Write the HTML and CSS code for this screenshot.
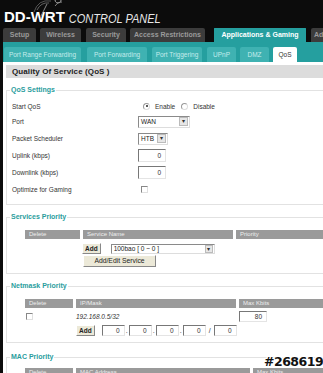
FILE: index.html
```html
<!DOCTYPE html>
<html lang="en">
<head>
    <meta charset="UTF-8">
    <title>DD-WRT Control Panel</title>
    <link rel="stylesheet" href="styles.css">
</head>
<body>
    <div class="page">
        <div class="header">
            <svg class="antenna" width="40" height="16" viewBox="0 0 40 16">
                <path d="M12 16 L18 4" stroke="#888" stroke-width="1" fill="none"/>
                <path d="M8 10 Q12 2 20 3" stroke="#777" stroke-width="0.8" fill="none"/>
                <path d="M5 12 Q9 -1 22 1" stroke="#666" stroke-width="0.8" fill="none"/>
                <path d="M29 3 a3 3 0 1 1 0.1 0" stroke="#aaa" stroke-width="1" fill="none"/>
                <path d="M26 6 Q29 1 33 2" stroke="#999" stroke-width="0.8" fill="none"/>
            </svg>
            <div class="logo">
                <span class="logo-dd">DD-WRT</span>
                <span class="logo-cp">CONTROL PANEL</span>
            </div>
        </div>

        <div class="main-tabs">
            <div class="tab t-setup">Setup</div>
            <div class="tab t-wireless">Wireless</div>
            <div class="tab t-security">Security</div>
            <div class="tab t-access">Access Restrictions</div>
            <div class="tab t-apps active">Applications &amp; Gaming</div>
            <div class="tab t-admin">Administration</div>
        </div>

        <div class="sub-tabs">
            <div class="subtab s-prf">Port Range Forwarding</div>
            <div class="subtab s-pf">Port Forwarding</div>
            <div class="subtab s-pt">Port Triggering</div>
            <div class="subtab s-upnp">UPnP</div>
            <div class="subtab s-dmz">DMZ</div>
            <div class="subtab s-qos active">QoS</div>
        </div>

        <div class="content">
            <h2 class="section-title">Quality Of Service (QoS )</h2>

            <fieldset class="group qos">
                <legend>QoS Settings</legend>
                <div class="row first">
                    <span class="label">Start QoS</span>
                    <span class="control">
                        <span class="radio checked"></span><span class="opt">Enable</span>
                        <span class="radio"></span><span class="opt">Disable</span>
                    </span>
                </div>
                <div class="row">
                    <span class="label">Port</span>
                    <span class="control"><span class="select port-select">WAN<span class="drop">&#9662;</span></span></span>
                </div>
                <div class="row">
                    <span class="label">Packet Scheduler</span>
                    <span class="control"><span class="select htb-select">HTB<span class="drop">&#9662;</span></span></span>
                </div>
                <div class="row">
                    <span class="label">Uplink (kbps)</span>
                    <span class="control"><span class="textbox">0</span></span>
                </div>
                <div class="row">
                    <span class="label">Downlink (kbps)</span>
                    <span class="control"><span class="textbox">0</span></span>
                </div>
                <div class="row">
                    <span class="label">Optimize for Gaming</span>
                    <span class="control"><span class="checkbox gaming"></span></span>
                </div>
            </fieldset>

            <fieldset class="group">
                <legend>Services Priority</legend>
                <div class="thead services-head">
                    <div class="th">Delete</div>
                    <div class="th">Service Name</div>
                    <div class="th">Priority</div>
                </div>
                <div class="service-add">
                    <span class="btn">Add</span>
                    <span class="select service-select">100bao [ 0 ~ 0 ]<span class="drop">&#9662;</span></span>
                </div>
                <div class="service-edit">
                    <span class="btn wide">Add/Edit Service</span>
                </div>
            </fieldset>

            <fieldset class="group">
                <legend>Netmask Priority</legend>
                <div class="thead netmask-head">
                    <div class="th">Delete</div>
                    <div class="th">IP/Mask</div>
                    <div class="th">Max Kbits</div>
                </div>
                <div class="netmask-row">
                    <span class="cell-del"><span class="checkbox"></span></span>
                    <span class="cell-ip">192.168.0.5/32</span>
                    <span class="textbox small">80</span>
                </div>
                <div class="netmask-add">
                    <span class="btn">Add</span>
                    <span class="textbox ip">0</span><span class="sep">.</span>
                    <span class="textbox ip">0</span><span class="sep">.</span>
                    <span class="textbox ip">0</span><span class="sep">.</span>
                    <span class="textbox ip">0</span><span class="sep slash">/</span>
                    <span class="textbox ip">0</span>
                </div>
            </fieldset>

            <fieldset class="group mac">
                <legend>MAC Priority</legend>
                <div class="thead mac-head">
                    <div class="th">Delete</div>
                    <div class="th">MAC Address</div>
                    <div class="th">Max Kbits</div>
                </div>
            </fieldset>
        </div>

        <div class="watermark">#268619</div>
    </div>
</body>
</html>
```

FILE: styles.css
```css
* {
    margin: 0;
    padding: 0;
    box-sizing: border-box;
}

body {
    background: #000;
    font-family: "Liberation Sans", Arial, sans-serif;
    width: 323px;
    height: 373px;
    overflow: hidden;
}

.page {
    position: relative;
    height: 373px;
    padding-left: 3px;
    background: #0c0c0c;
}

/* header */
.header {
    height: 28px;
    position: relative;
}

.antenna {
    position: absolute;
    left: 26px;
    top: 0;
}

.logo {
    display: flex;
    align-items: baseline;
    padding-top: 8px;
    padding-left: 1px;
    white-space: nowrap;
}

.logo-dd {
    color: #fff;
    font-weight: bold;
    font-size: 15px;
}

.logo-cp {
    color: #e8e8e8;
    font-style: italic;
    font-size: 11px;
    margin-left: 4px;
    display: inline-block;
    transform: scaleY(1.15);
}

/* main tabs */
.main-tabs {
    display: flex;
    height: 14px;
    white-space: nowrap;
    overflow: hidden;
}

.tab {
    background: #3c3c3c;
    color: #9a9a9a;
    font-weight: bold;
    font-size: 7px;
    line-height: 14px;
    text-align: center;
    border-radius: 2px 2px 0 0;
    flex-shrink: 0;
    overflow: hidden;
}

.t-setup { width: 33px; }
.t-wireless { width: 41px; margin-left: 4px; }
.t-security { width: 40px; margin-left: 5px; }
.t-access { width: 75px; margin-left: 4px; }
.t-apps { width: 92px; margin-left: 9px; }
.t-admin { width: 60px; margin-left: 5px; text-align: left; padding-left: 3px; }

.tab.active {
    background: #259f9f;
    color: #fff;
    margin-top: -1px;
    line-height: 16px;
    height: 15px;
}

/* sub tabs */
.sub-tabs {
    display: flex;
    background: #259f9f;
    height: 20px;
    padding: 5px 0 0 1px;
    white-space: nowrap;
}

.subtab {
    background: #3fb2b2;
    color: #c4ecec;
    font-size: 6.5px;
    line-height: 15px;
    text-align: center;
    border-radius: 2px 2px 0 0;
}

.s-prf { width: 77px; }
.s-pf { width: 60px; margin-left: 6px; }
.s-pt { width: 50px; margin-left: 5px; }
.s-upnp { width: 29px; margin-left: 5px; }
.s-dmz { width: 29px; margin-left: 4px; }
.s-qos { width: 24px; margin-left: 4px; }

.subtab.active {
    background: #fff;
    color: #333;
}

/* content */
.content {
    background: #fff;
    height: 311px;
    padding: 3px 0 0 3px;
}

.section-title {
    background: #dcdcdc;
    color: #222;
    font-size: 8px;
    font-weight: bold;
    line-height: 13px;
    padding-left: 6px;
    letter-spacing: 0.1px;
}

.group {
    border: 1px solid #e2e2e2;
    border-right: none;
    margin-top: 8px;
    padding: 5px 0 6px 5px;
}

.group legend {
    color: #2a9d9d;
    font-weight: bold;
    font-size: 7px;
    line-height: 8px;
    margin-left: -2px;
    padding: 0 1px;
}

.row {
    display: flex;
    align-items: center;
    height: 17px;
    font-size: 6.5px;
    color: #333;
}

.row.first {
    height: 14px;
}

.label {
    width: 126px;
}

.control {
    display: flex;
    align-items: center;
}

.radio {
    width: 7px;
    height: 7px;
    border-radius: 50%;
    border: 1px solid #999;
    border-right-color: #ddd;
    border-bottom-color: #ddd;
    background: #fff;
    position: relative;
    margin-left: 5px;
}

.radio.checked::after {
    content: "";
    position: absolute;
    left: 1.5px;
    top: 1.5px;
    width: 2px;
    height: 2px;
    border-radius: 50%;
    background: #222;
}

.opt {
    margin-left: 5px;
    margin-right: 1px;
}

.select {
    display: inline-flex;
    align-items: center;
    justify-content: space-between;
    height: 12px;
    border: 1px solid #8a8a8a;
    border-right-color: #ddd;
    border-bottom-color: #ddd;
    background: #fff;
    font-size: 6.5px;
    color: #222;
    padding-left: 2px;
}

.drop {
    width: 9px;
    height: 9px;
    margin-right: 1px;
    background: #e6e6e6;
    border: 1px solid #bbb;
    font-size: 6px;
    line-height: 7px;
    text-align: center;
    color: #333;
}

.port-select {
    width: 52px;
}

.htb-select {
    width: 30px;
}

.textbox {
    display: inline-block;
    width: 28px;
    height: 13px;
    border: 1px solid #777;
    border-right-color: #e4e4e4;
    border-bottom-color: #e4e4e4;
    background: #fff;
    font-size: 6.5px;
    line-height: 11px;
    text-align: right;
    padding-right: 4px;
    color: #333;
}

.textbox.small {
    height: 11px;
    line-height: 9px;
}

.checkbox {
    display: inline-block;
    width: 7px;
    height: 7px;
    border: 1px solid #888;
    border-right-color: #e0e0e0;
    border-bottom-color: #e0e0e0;
    background: #fff;
}

.gaming {
    margin-left: 3px;
}

/* tables */
.thead {
    display: flex;
    gap: 3px;
    margin-left: 13px;
    margin-top: 4px;
}

.th {
    background: #9a9a9a;
    color: #eee;
    font-size: 6px;
    line-height: 9px;
    padding-left: 4px;
    height: 9px;
}

.services-head .th:nth-child(1) { width: 55px; }
.services-head .th:nth-child(2) { width: 150px; }
.services-head .th:nth-child(3) { flex: 1; }

.netmask-head .th:nth-child(1),
.mac-head .th:nth-child(1) { width: 48px; }
.netmask-head .th:nth-child(2) { width: 160px; }
.mac-head .th:nth-child(2) { width: 174px; }
.netmask-head .th:nth-child(3),
.mac-head .th:nth-child(3) { flex: 1; }

.btn {
    display: inline-block;
    background: #ece9d8;
    border: 1px solid #fff;
    border-right-color: #888;
    border-bottom-color: #888;
    font-size: 6.5px;
    font-weight: bold;
    color: #222;
    height: 11px;
    line-height: 9px;
    padding: 0 2px;
    text-align: center;
}

.btn.wide {
    width: 73px;
    height: 12px;
    line-height: 10px;
    font-weight: normal;
    font-size: 6.8px;
}

.service-add {
    display: flex;
    align-items: center;
    gap: 10px;
    margin-left: 70px;
    margin-top: 4px;
}

.service-select {
    width: 104px;
    height: 10px;
}

.service-select .drop {
    width: 8px;
    height: 8px;
    line-height: 6px;
}

.service-edit {
    display: flex;
    margin-left: 71px;
    margin-top: 1px;
}

.netmask-row {
    display: flex;
    align-items: center;
    margin-left: 13px;
    margin-top: 3px;
    height: 11px;
    font-size: 6.5px;
}

.cell-del {
    display: flex;
    width: 51px;
    padding-left: 1px;
}

.cell-ip {
    width: 163px;
    font-style: italic;
    color: #333;
}

.netmask-add {
    display: flex;
    align-items: center;
    margin-left: 64px;
    margin-top: 3px;
    font-size: 7px;
    color: #333;
}

.netmask-add .btn {
    margin-right: 7px;
}

.textbox.ip {
    width: 23px;
    height: 11px;
    line-height: 9px;
}

.sep {
    width: 4px;
    text-align: center;
}

.sep.slash {
    width: 8px;
}

.group.mac {
    margin-top: 10px;
    border-bottom: none;
}

.mac-head {
    margin-top: 2px;
}

.watermark {
    position: absolute;
    left: 264px;
    top: 354px;
    font-family: "DejaVu Sans", sans-serif;
    font-weight: bold;
    font-size: 12.5px;
    color: #111;
    letter-spacing: -0.5px;
    text-shadow: 1px 0 #fff, -1px 0 #fff, 0 1px #fff, 0 -1px #fff, 1px 1px #fff, -1px -1px #fff, 1px -1px #fff, -1px 1px #fff;
}
```
